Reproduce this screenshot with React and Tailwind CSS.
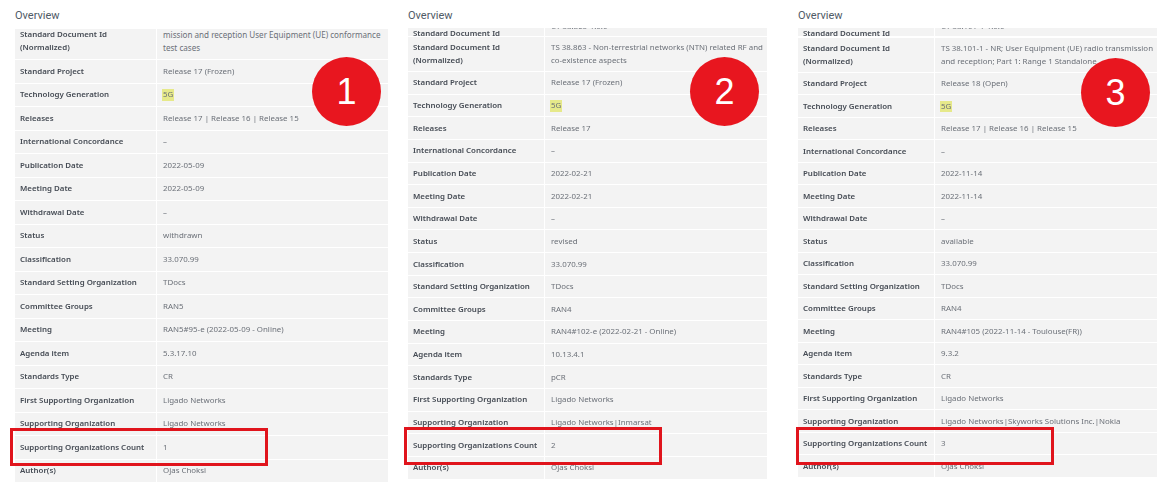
import React from "react";

function Row({ label, value, rowH, labelW, highlight }) {
  return (
    <div className={`flex mb-px ${rowH}`}>
      <div className={`${labelW} shrink-0 mr-px bg-[#f3f3f3] flex items-center pt-px pl-[5px] font-semibold whitespace-nowrap text-[#454b54] text-[7.9px]`}>
        {label}
      </div>
      <div className="flex-1 bg-[#f3f3f3] flex items-center pt-px pl-[6px] whitespace-nowrap text-[#6b7078] text-[7.9px]">
        {highlight ? <span className="bg-[#e6e98a] px-px -ml-px">{value}</span> : value}
      </div>
    </div>
  );
}

function Circle({ n, pos }) {
  return (
    <div className={`absolute ${pos} w-[69px] h-[69px] rounded-full bg-[#e8161f] text-white flex items-center justify-center text-[36px] leading-none font-['Liberation_Sans',sans-serif]`}>
      {n}
    </div>
  );
}

function Panel({ wrap, rowH, labelW, top, rows, n, circlePos, rectPos }) {
  return (
    <div className={`relative shrink-0 ${wrap}`}>
      <div className="h-[29px] pt-[9px] text-[11px] leading-[14px] text-[#4f5a66] font-['Roboto',sans-serif]">Overview</div>
      <div className="blur-[0.45px] font-['Noto_Sans','Open_Sans',sans-serif]">
        {top}
        {rows.map((r) => (
          <Row key={r[0]} label={r[0]} value={r[1]} rowH={rowH} labelW={labelW} highlight={r[0] === "Technology Generation"} />
        ))}
      </div>
      <Circle n={n} pos={circlePos} />
      <div className={`absolute ${rectPos} w-[258px] h-[38px] border-[3px] border-[#e0141c]`} />
    </div>
  );
}

function Top1() {
  return (
    <div className="flex mb-px h-[30px] overflow-hidden text-[7.9px] leading-[12.6px] whitespace-nowrap">
      <div className="w-[141px] shrink-0 mr-px bg-[#f3f3f3] pl-[5px] font-semibold text-[#454b54]">
        <div className="-translate-y-px">Standard Document Id<br />(Normalized)</div>
      </div>
      <div className="flex-1 bg-[#f3f3f3] pl-[6px] text-[#6b7078] text-[8.1px]">
        mission and reception User Equipment (UE) conformance<br />test cases
      </div>
    </div>
  );
}

function TopN({ clip, title1, title2, labelW, h2, gap }) {
  return (
    <>
      <div className={`flex ${gap} h-[8px] -mt-px overflow-hidden text-[7.9px] leading-[8px] whitespace-nowrap`}>
        <div className={`${labelW} shrink-0 mr-px bg-[#f3f3f3] pl-[5px] font-semibold text-[#454b54]`}>
          <div className="translate-y-px">Standard Document Id</div>
        </div>
        <div className="flex-1 bg-[#f3f3f3] pl-[6px] text-[#6b7078]">
          <div className="-translate-y-[6px]">{clip}</div>
        </div>
      </div>
      <div className={`flex mb-px ${h2} text-[7.9px] leading-[12.6px] whitespace-nowrap`}>
        <div className={`${labelW} shrink-0 mr-px bg-[#f3f3f3] pl-[5px] font-semibold text-[#454b54] flex items-center`}>
          <span>Standard Document Id<br />(Normalized)</span>
        </div>
        <div className="flex-1 bg-[#f3f3f3] pl-[6px] text-[#6b7078] flex items-center">
          <span>{title1}<br />{title2}</span>
        </div>
      </div>
    </>
  );
}

const rows1 = [
  ["Standard Project", "Release 17 (Frozen)"],
  ["Technology Generation", "5G"],
  ["Releases", "Release 17 | Release 16 | Release 15"],
  ["International Concordance", "–"],
  ["Publication Date", "2022-05-09"],
  ["Meeting Date", "2022-05-09"],
  ["Withdrawal Date", "–"],
  ["Status", "withdrawn"],
  ["Classification", "33.070.99"],
  ["Standard Setting Organization", "TDocs"],
  ["Committee Groups", "RAN5"],
  ["Meeting", "RAN5#95-e (2022-05-09 - Online)"],
  ["Agenda item", "5.3.17.10"],
  ["Standards Type", "CR"],
  ["First Supporting Organization", "Ligado Networks"],
  ["Supporting Organization", "Ligado Networks"],
  ["Supporting Organizations Count", "1"],
  ["Author(s)", "Ojas Choksi"],
];
const rows2 = [
  ["Standard Project", "Release 17 (Frozen)"],
  ["Technology Generation", "5G"],
  ["Releases", "Release 17"],
  ["International Concordance", "–"],
  ["Publication Date", "2022-02-21"],
  ["Meeting Date", "2022-02-21"],
  ["Withdrawal Date", "–"],
  ["Status", "revised"],
  ["Classification", "33.070.99"],
  ["Standard Setting Organization", "TDocs"],
  ["Committee Groups", "RAN4"],
  ["Meeting", "RAN4#102-e (2022-02-21 - Online)"],
  ["Agenda item", "10.13.4.1"],
  ["Standards Type", "pCR"],
  ["First Supporting Organization", "Ligado Networks"],
  ["Supporting Organization", "Ligado Networks|Inmarsat"],
  ["Supporting Organizations Count", "2"],
  ["Author(s)", "Ojas Choksi"],
];
const rows3 = [
  ["Standard Project", "Release 18 (Open)"],
  ["Technology Generation", "5G"],
  ["Releases", "Release 17 | Release 16 | Release 15"],
  ["International Concordance", "–"],
  ["Publication Date", "2022-11-14"],
  ["Meeting Date", "2022-11-14"],
  ["Withdrawal Date", "–"],
  ["Status", "available"],
  ["Classification", "33.070.99"],
  ["Standard Setting Organization", "TDocs"],
  ["Committee Groups", "RAN4"],
  ["Meeting", "RAN4#105 (2022-11-14 - Toulouse(FR))"],
  ["Agenda item", "9.3.2"],
  ["Standards Type", "CR"],
  ["First Supporting Organization", "Ligado Networks"],
  ["Supporting Organization", "Ligado Networks|Skyworks Solutions Inc.|Nokia"],
  ["Supporting Organizations Count", "3"],
  ["Author(s)", "Ojas Choksi"],
];

export default function App() {
  return (
    <div className="w-[1167px] h-[484px] bg-white overflow-hidden flex pl-[15px]">
      <Panel
        wrap="w-[373px] mr-[20px]"
        rowH="h-[22.5px]"
        labelW="w-[141px]"
        top={<Top1 />}
        rows={rows1}
        n="1"
        circlePos="left-[297px] top-[57px]"
        rectPos="left-[-5px] top-[428px]"
      />
      <Panel
        wrap="w-[359px] mr-[31px]"
        rowH="h-[21.65px]"
        labelW="w-[136px]"
        top={
          <TopN
            clip="CT 38.863-1.0.0"
            title1="TS 38.863 - Non-terrestrial networks (NTN) related RF and"
            title2="co-existence aspects"
            labelW="w-[136px]"
            h2="h-[34px]"
            gap="mb-px"
          />
        }
        rows={rows2}
        n="2"
        circlePos="left-[282px] top-[57px]"
        rectPos="left-[-4px] top-[427px]"
      />
      <Panel
        wrap="w-[359px]"
        rowH="h-[21.5px]"
        labelW="w-[136px]"
        top={
          <TopN
            clip="CT 38.101-1-1.0.0"
            title1="TS 38.101-1 - NR; User Equipment (UE) radio transmission"
            title2="and reception; Part 1: Range 1 Standalone"
            labelW="w-[136px]"
            h2="h-[33.7px]"
            gap="mb-[2px]"
          />
        }
        rows={rows3}
        n="3"
        circlePos="left-[283px] top-[58px]"
        rectPos="left-[-2px] top-[427px]"
      />
    </div>
  );
}
